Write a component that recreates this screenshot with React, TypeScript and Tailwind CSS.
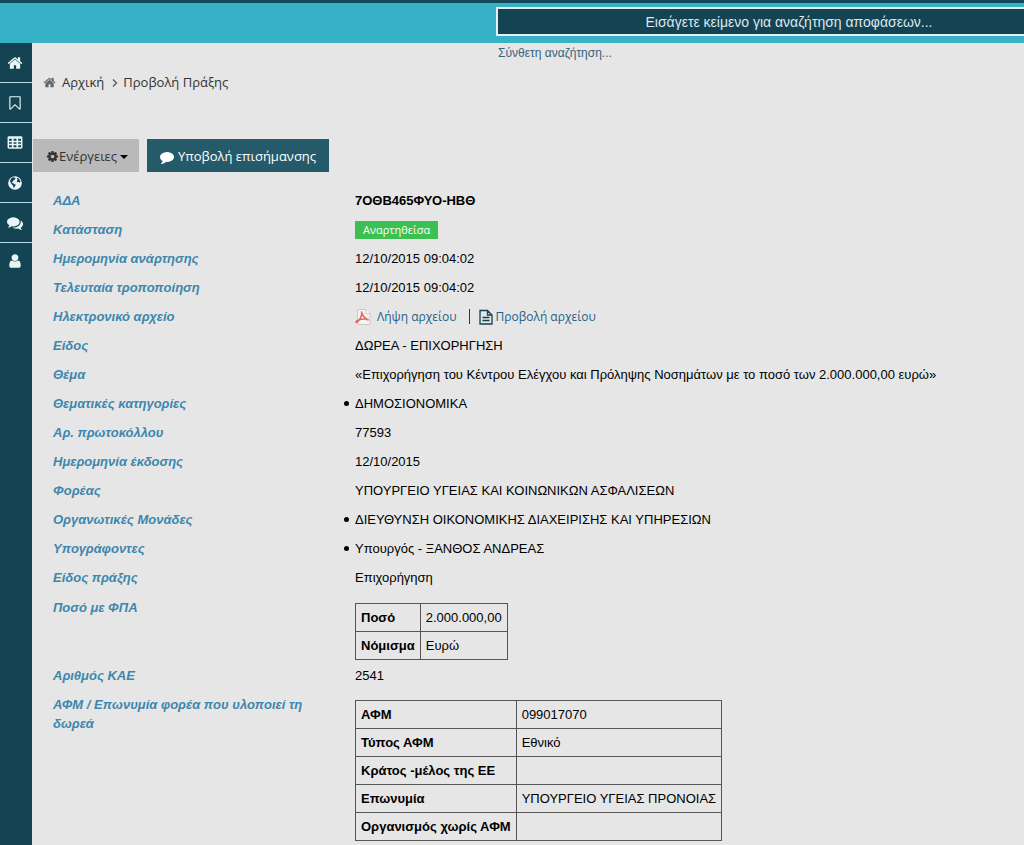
import type { ReactNode } from 'react'

interface IconProps {
    d: string
    className?: string
}

interface Field {
    label: string
    value: ReactNode
    rowClass?: string
}

// 1792 単位グリッドのアイコンパス
const HOME = 'M1472 992v480q0 26-19 45t-45 19h-384v-384h-256v384h-384q-26 0-45-19t-19-45v-480q0-1 .5-3t.5-3l575-474 575 474q1 2 1 6zm223-69l-62 74q-8 9-21 11h-3q-13 0-21-7l-692-577-692 577q-12 8-24 7-13-2-21-11l-62-74q-8-10-7-23.5t11-21.5l719-599q32-26 76-26t76 26l244 204v-195q0-14 9-23t23-9h192q14 0 23 9t9 23v408l219 182q10 8 11 21.5t-7 23.5z'
const BOOKMARK = 'M1408 256h-1024v1242l423-406 89-85 89 85 423 406v-1242zm12-128q23 0 44 9 33 13 52.5 41t19.5 62v1289q0 34-19.5 62t-52.5 41q-19 8-44 8-48 0-83-32l-441-424-441 424q-36 33-83 33-23 0-44-9-33-13-52.5-41t-19.5-62v-1289q0-34 19.5-62t52.5-41q21-9 44-9h1048z'
const TABLE = 'M224 128h1344q66 0 113 47t47 113v1088q0 66-47 113t-113 47h-1344q-66 0-113-47t-47-113v-1088q0-66 47-113t113-47zM224 416v224h320v-224zM736 416v224h320v-224zM1248 416v224h320v-224zM224 800v192h320v-192zM736 800v192h320v-192zM1248 800v192h320v-192zM224 1152v224h320v-224zM736 1152v224h320v-224zM1248 1152v224h320v-224z'
const GLOBE = 'M896 128a768 768 0 1 0 0 1536a768 768 0 1 0 0-1536zM480 360l200-110 180 20 100 90-70 150-150 70-30 110-130 60-20 120 110 30 130 110 150 50 20 110-110 120-50 130-110-60-30-180-130-110-90-170-110-160 30-180zM1130 300l180 90 150 190 50 200-100 60-120-60-130 20-70-110 60-130 90-60-130-60z'
const COMMENTS = 'M1408 768q0 139-94 257t-256.5 186.5-353.5 68.5q-86 0-176-16-124 88-278 128-36 9-86 16h-3q-11 0-20.5-8t-11.5-21q-1-3-1-6.5t.5-6.5 2-6l2.5-5 3.5-5.5 4-5 4.5-5 4-4.5q5-6 23-25t26-29.5 22.5-29 25-38.5 20.5-44q-124-72-195-177t-71-224q0-139 94-257t256.5-186.5 353.5-68.5 353.5 68.5 256.5 186.5 94 257zm384 256q0 120-71 224.5t-195 176.5q10 24 20.5 44t25 38.5 22.5 29 26 29.5 23 25q1 1 4 4.5t4.5 5 4 5 3.5 5.5l2.5 5 2 6 .5 6.5-1 6.5q-3 14-13 22t-22 7q-50-7-86-16-154-40-278-128-90 16-176 16-271 0-472-132 58 4 88 4 161 0 309-45t264-129q125-92 192-212t67-254q0-77-23-152 129 71 204 178t75 230z'
const USER = 'M1536 1399q0 109-62.5 187t-150.5 78h-854q-88 0-150.5-78t-62.5-187q0-85 8.5-160.5t31.5-152 58.5-131 94-89 134.5-34.5q131 128 313 128t313-128q76 0 134.5 34.5t94 89 58.5 131 31.5 152 8.5 160.5zm-256-887q0 159-112.5 271.5t-271.5 112.5-271.5-112.5-112.5-271.5 112.5-271.5 271.5-112.5 271.5 112.5 112.5 271.5z'
const COMMENT = 'M1792 896q0 174-120 321.5t-326 233-450 85.5q-70 0-145-8-198 175-460 242-49 14-114 22-17 2-30.5-9t-17.5-29v-1q-3-4-.5-12t2-10 4.5-9.5l6-9 7-8.5 8-9q7-8 31-34.5t34.5-38 31-39.5 32.5-51 27-59 26-76q-157-89-247.5-220t-90.5-281q0-130 71-248.5t191-204.5 286-136.5 348-50.5q244 0 450 85.5t326 233 120 321.5z'
const COG = 'M1152 896q0-106-75-181t-181-75-181 75-75 181 75 181 181 75 181-75 75-181zm512-109v222q0 12-8 23t-20 13l-185 28q-19 54-39 91 35 50 107 138 10 12 10 25t-9 23q-27 37-99 108t-94 71q-12 0-26-9l-138-108q-44 23-91 38-16 136-29 186-7 28-36 28h-222q-14 0-24.5-8.5t-11.5-21.5l-28-184q-49-16-90-37l-141 107q-10 9-25 9-14 0-25-11-126-114-165-168-7-10-7-23 0-12 8-23 15-21 51-66.5t54-70.5q-27-50-41-99l-183-27q-13-2-21-12.5t-8-23.5v-222q0-12 8-23t19-13l186-28q14-46 39-92-40-57-107-138-10-12-10-24 0-10 9-23 26-36 98.5-107.5t94.5-71.5q13 0 26 10l138 107q44-23 91-38 16-136 29-186 7-28 36-28h222q14 0 24.5 8.5t11.5 21.5l28 184q49 16 90 37l142-107q9-9 24-9 13 0 25 10 129 119 165 170 7 8 7 22 0 12-8 23-15 21-51 66.5t-54 70.5q26 50 41 98l183 28q13 2 21 12.5t8 23.5z'

function Icon({ d, className = 'size-[14px]' }: IconProps) {
    return (
        <svg viewBox="0 0 1792 1792" className={`shrink-0 ${className}`} fill="currentColor" fillRule="evenodd" aria-hidden="true">
            <path d={d} />
        </svg>
    )
}

function PdfIcon() {
    return (
        <svg viewBox="0 0 16 16" className="size-4 shrink-0" aria-hidden="true">
            <path d="M2.500 .5h8.500l4 4v11h-12.500z" fill="#f4f2f2" stroke="#cfcaca" />
            <path d="M11 .5v4h4" fill="#fff" stroke="#cfcaca" />
            <path d="M.5 13.500c1.500-2.500 5-4 13-3.200M6.300 2.500c1 4 2.500 6.500 7.200 8.800M6.800 3c.3 4-2 8-5.300 11" fill="none" stroke="#e0675f" strokeWidth="1.500" />
        </svg>
    )
}

function FileIcon() {
    return (
        <svg viewBox="0 0 14 16" className="h-4 w-[14px] shrink-0" fill="none" stroke="#14414f" strokeWidth="1.300" aria-hidden="true">
            <path d="M1 1.500h7.500l4.500 4.500v9h-12zM8.500 1.500v4.500h4.500M3.500 8.500h7M3.500 11.500h7" />
        </svg>
    )
}

const menu = [
    { label: 'Αρχική', d: HOME },
    { label: 'Σελιδοδείκτες', d: BOOKMARK },
    { label: 'Πίνακας', d: TABLE },
    { label: 'Ιστότοπος', d: GLOBE },
    { label: 'Σχόλια', d: COMMENTS },
    { label: 'Χρήστης', d: USER },
]

function DetailTable({ rows }: { rows: [string, string][] }) {
    return (
        <table className="mt-[5px] border-collapse">
            <tbody>
                {rows.map(([name, value]) => (
                    <tr key={name} className="h-7">
                        <th scope="row" className="border border-[#555] px-[5px] text-left font-bold">{name}</th>
                        <td className="border border-[#555] px-[5px]">{value}</td>
                    </tr>
                ))}
            </tbody>
        </table>
    )
}

function Bulleted({ children }: { children: ReactNode }) {
    return (
        <ul className="-ml-[11px]">
            <li className="flex items-center gap-[6px]">
                <span className="size-[5px] rounded-full bg-black" />
                {children}
            </li>
        </ul>
    )
}

const fields: Field[] = [
    { label: 'ΑΔΑ', value: <strong>7ΟΘΒ465ΦΥΟ-ΗΒΘ</strong> },
    {
        label: 'Κατάσταση',
        value: <span className="inline-block h-[18px] bg-[#3cc051] px-2 font-['Open_Sans',sans-serif] text-[11px] leading-[17px] text-white">Αναρτηθείσα</span>,
    },
    { label: 'Ημερομηνία ανάρτησης', value: '12/10/2015 09:04:02' },
    { label: 'Τελευταία τροποποίηση', value: '12/10/2015 09:04:02' },
    {
        label: 'Ηλεκτρονικό αρχείο',
        value: (
            <div className="flex items-center font-['Open_Sans',sans-serif] text-xs leading-[19px] text-[#1f5f87]">
                <a href="#download" className="flex items-center gap-[6px]"><PdfIcon />Λήψη αρχείου</a>
                <span className="ml-3 mr-[9px] h-[15px] w-px bg-[#14414f]" />
                <a href="#view" className="flex items-center gap-[3px]"><FileIcon />Προβολή αρχείου</a>
            </div>
        ),
    },
    { label: 'Είδος', value: 'ΔΩΡΕΑ - ΕΠΙΧΟΡΗΓΗΣΗ' },
    { label: 'Θέμα', value: '«Επιχορήγηση του Κέντρου Ελέγχου και Πρόληψης Νοσημάτων με το ποσό των 2.000.000,00 ευρώ»' },
    { label: 'Θεματικές κατηγορίες', value: <Bulleted>ΔΗΜΟΣΙΟΝΟΜΙΚΑ</Bulleted> },
    { label: 'Αρ. πρωτοκόλλου', value: '77593' },
    { label: 'Ημερομηνία έκδοσης', value: '12/10/2015' },
    { label: 'Φορέας', value: 'ΥΠΟΥΡΓΕΙΟ ΥΓΕΙΑΣ ΚΑΙ ΚΟΙΝΩΝΙΚΩΝ ΑΣΦΑΛΙΣΕΩΝ' },
    { label: 'Οργανωτικές Μονάδες', value: <Bulleted>ΔΙΕΥΘΥΝΣΗ ΟΙΚΟΝΟΜΙΚΗΣ ΔΙΑΧΕΙΡΙΣΗΣ ΚΑΙ ΥΠΗΡΕΣΙΩΝ</Bulleted> },
    { label: 'Υπογράφοντες', value: <Bulleted>Υπουργός - ΞΑΝΘΟΣ ΑΝΔΡΕΑΣ</Bulleted> },
    { label: 'Είδος πράξης', value: 'Επιχορήγηση' },
    { label: 'Ποσό με ΦΠΑ', rowClass: 'pt-[6px] pb-px', value: <DetailTable rows={[['Ποσό', '2.000.000,00'], ['Νόμισμα', 'Ευρώ']]} /> },
    { label: 'Αριθμός ΚΑΕ', value: '2541' },
    {
        label: 'ΑΦΜ / Επωνυμία φορέα που υλοποιεί τη δωρεά',
        rowClass: 'pt-[5px]',
        value: (
            <DetailTable
                rows={[
                    ['ΑΦΜ', '099017070'],
                    ['Τύπος ΑΦΜ', 'Εθνικό'],
                    ['Κράτος -μέλος της ΕΕ', ''],
                    ['Επωνυμία', 'ΥΠΟΥΡΓΕΙΟ ΥΓΕΙΑΣ ΠΡΟΝΟΙΑΣ'],
                    ['Οργανισμός χωρίς ΑΦΜ', ''],
                ]}
            />
        ),
    },
]

export default function App() {
    return (
        <div className="flex min-h-screen flex-col bg-[#e6e6e6] font-['Liberation_Sans',Arial,sans-serif] text-[13px] leading-[19px] text-black">
            <header className="flex h-[43px] border-t-[3px] border-[#14495a] bg-[#36b1c6] pl-[496px] pt-[4px]">
                <input
                    type="text"
                    aria-label="Αναζήτηση αποφάσεων"
                    placeholder="Εισάγετε κείμενο για αναζήτηση αποφάσεων..."
                    className="h-[29px] min-w-0 flex-1 border-2 border-r-0 border-[#e6eef0] bg-[#144454] pl-14 text-center text-sm text-white placeholder:text-[#dce8ec]"
                />
            </header>

            <div className="flex flex-1">
                <nav className="w-8 shrink-0 bg-[#144454] text-[#e8f6f8]">
                    {menu.map((item) => (
                        <a
                            key={item.label}
                            href="#menu"
                            aria-label={item.label}
                            className="flex h-10 items-center justify-center border-b border-[#b9dbe3] pr-[3px] last:h-9 last:border-b-0"
                        >
                            <Icon d={item.d} className="size-4" />
                        </a>
                    ))}
                </nav>

                <main className="min-w-0 flex-1">
                    <div className="flex pl-[466px] pt-0.5">
                        <a href="#advanced" className="text-xs text-[#35647b]">Σύνθετη αναζήτηση...</a>
                    </div>

                    {/* パンくずリスト */}
                    <div className="mt-3 flex items-center pl-[11px] font-['Open_Sans',sans-serif] text-[13px] text-[#333]">
                        <Icon d={HOME} className="mr-[6px] size-[13px] text-[#666]" />
                        <a href="#home">Αρχική</a>
                        <svg viewBox="0 0 6 8" className="ml-2 mr-[5px] h-2 w-[6px]" fill="none" stroke="#555" strokeWidth="1.3" aria-hidden="true">
                            <path d="M1 .5l3.500 3.500-3.500 3.500" />
                        </svg>
                        <span>Προβολή Πράξης</span>
                    </div>

                    <div className="mt-[47px] flex gap-2 pl-px font-['Open_Sans',sans-serif] text-[13px]">
                        <button type="button" className="flex h-[33px] items-center bg-[#b9b9b9] pl-[13px] pr-[11px] pt-0.5 text-[#333]">
                            <Icon d={COG} className="size-[13px]" />
                            Ενέργειες
                            <span className="ml-[3px] border-x-4 border-t-4 border-x-transparent border-t-black" />
                        </button>
                        <button type="button" className="flex h-[33px] items-center gap-1 bg-[#255a6b] px-[13px] pt-0.5 text-white">
                            <Icon d={COMMENT} />
                            Υποβολή επισήμανσης
                        </button>
                    </div>

                    {/* 決定の詳細 */}
                    <dl className="mt-[14px] pl-[21px]">
                        {fields.map((field) => (
                            <div key={field.label} className={`flex ${field.rowClass ?? 'py-[5px]'}`}>
                                <dt className="w-[302px] shrink-0 pr-[40px] font-bold italic text-[#3d87ad]">{field.label}</dt>
                                <dd className="min-w-0 flex-1">{field.value}</dd>
                            </div>
                        ))}
                    </dl>
                </main>
            </div>
        </div>
    )
}
